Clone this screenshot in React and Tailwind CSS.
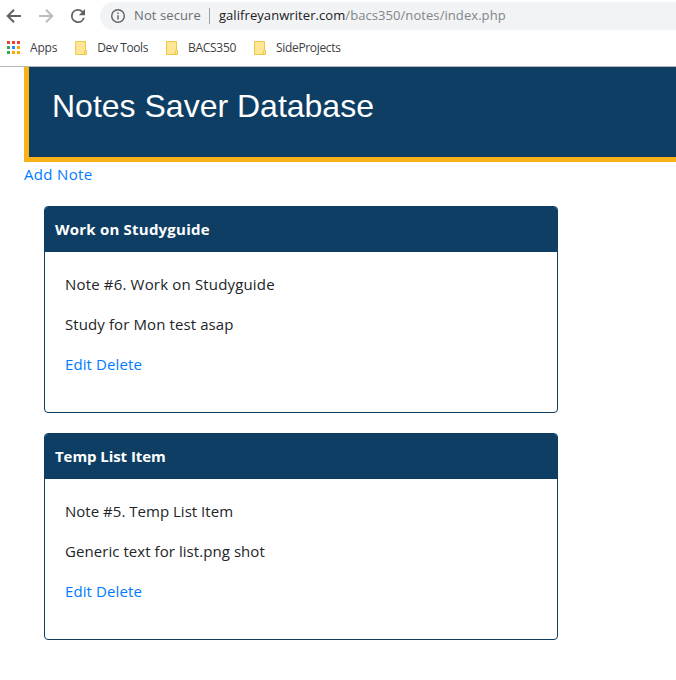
import React from "react";

const bookmarks = [
  { label: "Dev Tools", cls: "ml-[18px]", text: "ml-[10px] tracking-[-0.4px]" },
  { label: "BACS350", cls: "ml-[18px]", text: "ml-[10px] tracking-[-0.3px]" },
  { label: "SideProjects", cls: "ml-[18px]", text: "ml-[10px] tracking-[-0.33px]" },
];

const appDots = [
  "#ea4335", "#ea4335", "#ea4335",
  "#34a853", "#1a8cff", "#f9ab00",
  "#34a853", "#f9ab00", "#f9ab00",
];

const notes = [
  {
    title: "Work on Studyguide", titleCls: "tracking-[0.22px]",
    line: "Note #6. Work on Studyguide", lineCls: "tracking-[0.17px]",
    text: "Study for Mon test asap", textCls: "tracking-[0.1px]",
  },
  {
    title: "Temp List Item", titleCls: "tracking-[-0.07px]",
    line: "Note #5. Temp List Item", lineCls: "tracking-[0.02px]",
    text: "Generic text for list.png shot", textCls: "tracking-[0.06px]",
  },
];

function Arrow({ className }) {
  return (
    <svg viewBox="0 0 16 16" className={"h-4 w-4 shrink-0 " + className} fill="none" stroke="currentColor" strokeWidth="2">
      <path d="M15 8H2.5M8 1.7 1.7 8 8 14.3" />
    </svg>
  );
}

function Reload() {
  return (
    <svg viewBox="4 4 16 16" className="ml-[17px] h-[14px] w-[14px] shrink-0 text-[#5f6368]" fill="currentColor">
      <path d="M17.65 6.35A7.958 7.958 0 0 0 12 4a8 8 0 1 0 7.73 10h-2.08A6 6 0 1 1 12 6c1.66 0 3.14.69 4.22 1.78L13 11h7V4z" />
    </svg>
  );
}

function Info() {
  return (
    <svg viewBox="0 0 14 14" className="h-[14px] w-[14px] shrink-0 text-[#5f6368]" fill="none" stroke="currentColor" strokeWidth="1.4">
      <circle cx="7" cy="7" r="6.3" />
      <path d="M7 6.2v4.3M7 3.5v1.4" />
    </svg>
  );
}

function Folder() {
  return (
    <svg viewBox="0 0 12 14" className="h-[14px] w-[12px] shrink-0">
      <path d="M.5.5h10v9h1v4H.5z" fill="#ffe694" stroke="#ebc846" />
      <path d="M9.5 13V10.5a1 1 0 0 1 1-1" fill="none" stroke="#ebc846" />
    </svg>
  );
}

function NoteCard({ note }) {
  return (
    <article className="mt-5 w-[514px] overflow-hidden rounded-[4px] border border-[#0e3e64]">
      <h2 className={"bg-[#0e3e64] px-[10px] pt-[10px] pb-[11px] text-[15px] leading-6 font-bold text-white " + note.titleCls}>{note.title}</h2>
      <div className="p-5">
        <p className={"mb-4 " + note.lineCls}>{note.line}</p>
        <p className={"mb-4 " + note.textCls}>{note.text}</p>
        <p className="mb-4 tracking-[0.1px] text-[#007bff]"><a>Edit</a> <a>Delete</a></p>
      </div>
    </article>
  );
}

export default function App() {
  return (
    <div className="h-[680px] w-[676px] overflow-hidden bg-white font-['Open_Sans',sans-serif] text-[#212529]">
      <div className="flex h-8 items-center pl-[6px]">
        <Arrow className="text-[#5f6368]" />
        <Arrow className="ml-[16px] rotate-180 text-[#babcbe]" />
        <Reload />
        <div className="ml-[15px] flex h-7 flex-1 items-center rounded-l-full bg-[#f1f3f4] pl-[11px] text-[13px] whitespace-nowrap">
          <Info />
          <span className="ml-[9px] tracking-[0.1px] text-[#6b6f73]">Not secure</span>
          <span className="ml-2 h-4 w-px bg-[#9aa0a6]" />
          <span className="ml-[9px] tracking-[0.07px] text-[#202124]">galifreyanwriter.com<span className="text-[#80868b]">/bacs350/notes/index.php</span></span>
        </div>
      </div>
      <div className="flex h-[35px] items-center border-b border-[#b6b4b6] pb-[2px] pl-[7px] text-[12px] whitespace-nowrap text-[#3c4043]">
        <div className="mb-px grid grid-cols-3 gap-[2px]">
          {appDots.map((c, i) => <span key={i} className="h-[3px] w-[3px]" style={{ backgroundColor: c }} />)}
        </div>
        <span className="ml-[10px] tracking-[-0.18px]">Apps</span>
        {bookmarks.map((b) => (
          <div key={b.label} className={"flex items-center " + b.cls}>
            <Folder />
            <span className={b.text}>{b.label}</span>
          </div>
        ))}
      </div>
      <main className="pl-6 text-[15px] leading-6">
        <header className="h-[95px] border-b-[5px] border-l-[5px] border-[#f7b218] bg-[#0e3e64] pt-5 pl-[23px]">
          <h1 className="font-['Liberation_Sans',Arial,sans-serif] text-[32px] leading-[38px] text-white">Notes Saver Database</h1>
        </header>
        <a className="block tracking-[0.32px] text-[#007bff]">Add Note</a>
        <section className="pl-5">
          {notes.map((n) => <NoteCard key={n.title} note={n} />)}
        </section>
      </main>
    </div>
  );
}
